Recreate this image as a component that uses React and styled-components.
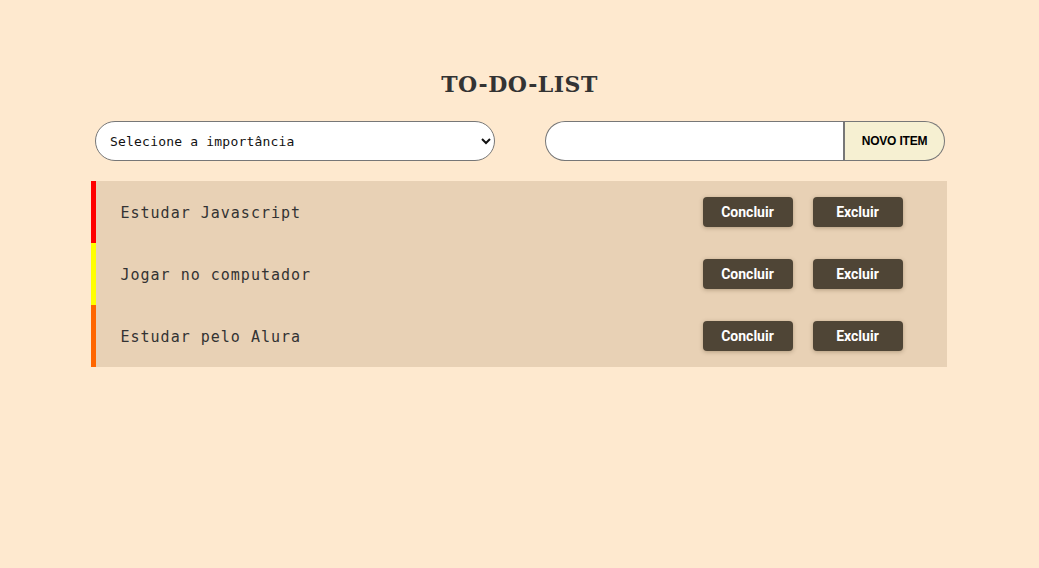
import React from "react";
import styled, { createGlobalStyle } from "styled-components";

const Global = createGlobalStyle`
  html, body { margin: 0; padding: 0; background: #fee9cf; }
  body { font-family: "DejaVu Sans Mono", monospace; }
`;

const Page = styled.main`
  width: 1039px;
  min-height: 568px;
  display: flex;
  flex-direction: column;
  align-items: center;
  padding-top: 69px;
  box-sizing: border-box;
`;

const Title = styled.h1`
  margin: 0;
  font-family: "DejaVu Serif", "Liberation Serif", serif;
  font-weight: 700;
  font-size: 22px;
  line-height: 30px;
  color: #333;
  letter-spacing: 0.5px;
`;

const Controls = styled.div`
  width: 850px;
  display: flex;
  justify-content: space-between;
  margin-top: 22px;
  margin-left: 1px;
`;

const Select = styled.select`
  width: 400px;
  height: 40px;
  border: 1px solid #777;
  border-radius: 20px;
  background: #fff;
  padding: 0 10px 0 10px;
  font-family: "DejaVu Sans Mono", monospace;
  font-size: 13px;
  letter-spacing: 0.2px;
  color: #111;
  box-sizing: border-box;
`;

const InputGroup = styled.div`
  display: flex;
  width: 400px;
  height: 40px;
`;

const TextInput = styled.input`
  flex: 1;
  height: 40px;
  border: 1px solid #777;
  border-right: 2px solid #777;
  border-radius: 20px 0 0 20px;
  background: #fff;
  box-sizing: border-box;
  padding: 0 14px;
  outline: none;
`;

const AddButton = styled.button`
  width: 100px;
  height: 40px;
  border: 1px solid #777;
  border-left: none;
  border-radius: 0 20px 20px 0;
  background: #f6f0d2;
  font-family: "Liberation Sans", Arial, sans-serif;
  font-weight: 700;
  font-size: 12px;
  letter-spacing: -0.2px;
  color: #000;
  box-sizing: border-box;
  padding: 0;
`;

const List = styled.ul`
  list-style: none;
  margin: 20px 0 0;
  padding: 0;
  width: 856px;
  margin-left: -2px;
  background: #e8d1b5;
`;

const Item = styled.li`
  height: 62px;
  display: flex;
  align-items: center;
  border-left: 5px solid ${(p) => p.$color};
  padding-left: 25px;
  padding-right: 44px;
  box-sizing: border-box;
`;

const ItemText = styled.span`
  flex: 1;
  font-family: "DejaVu Sans Mono", monospace;
  font-size: 15px;
  color: #333;
  letter-spacing: 1px;
  padding-top: 2px;
`;

const Actions = styled.div`
  display: flex;
  gap: 20px;
`;

const ActionButton = styled.button`
  width: 90px;
  height: 30px;
  border: none;
  border-radius: 4px;
  background: #4f4536;
  color: #fff;
  font-family: Roboto, "Liberation Sans", sans-serif;
  font-weight: 700;
  font-size: 14px;
  box-shadow: 0 1px 4px rgba(80, 60, 30, 0.35);
  cursor: pointer;
`;

const items = [
  { text: "Estudar Javascript", color: "#ff0000" },
  { text: "Jogar no computador", color: "#ffff00" },
  { text: "Estudar pelo Alura", color: "#ff6600" },
];

export default function App() {
  return (
    <>
      <Global />
      <Page>
        <Title>TO-DO-LIST</Title>
        <Controls>
          <Select defaultValue="">
            <option value="">Selecione a importância</option>
            <option value="alta">Alta</option>
            <option value="media">Média</option>
            <option value="baixa">Baixa</option>
          </Select>
          <InputGroup>
            <TextInput type="text" />
            <AddButton>NOVO ITEM</AddButton>
          </InputGroup>
        </Controls>
        <List>
          {items.map((it) => (
            <Item key={it.text} $color={it.color}>
              <ItemText>{it.text}</ItemText>
              <Actions>
                <ActionButton>Concluir</ActionButton>
                <ActionButton>Excluir</ActionButton>
              </Actions>
            </Item>
          ))}
        </List>
      </Page>
    </>
  );
}
